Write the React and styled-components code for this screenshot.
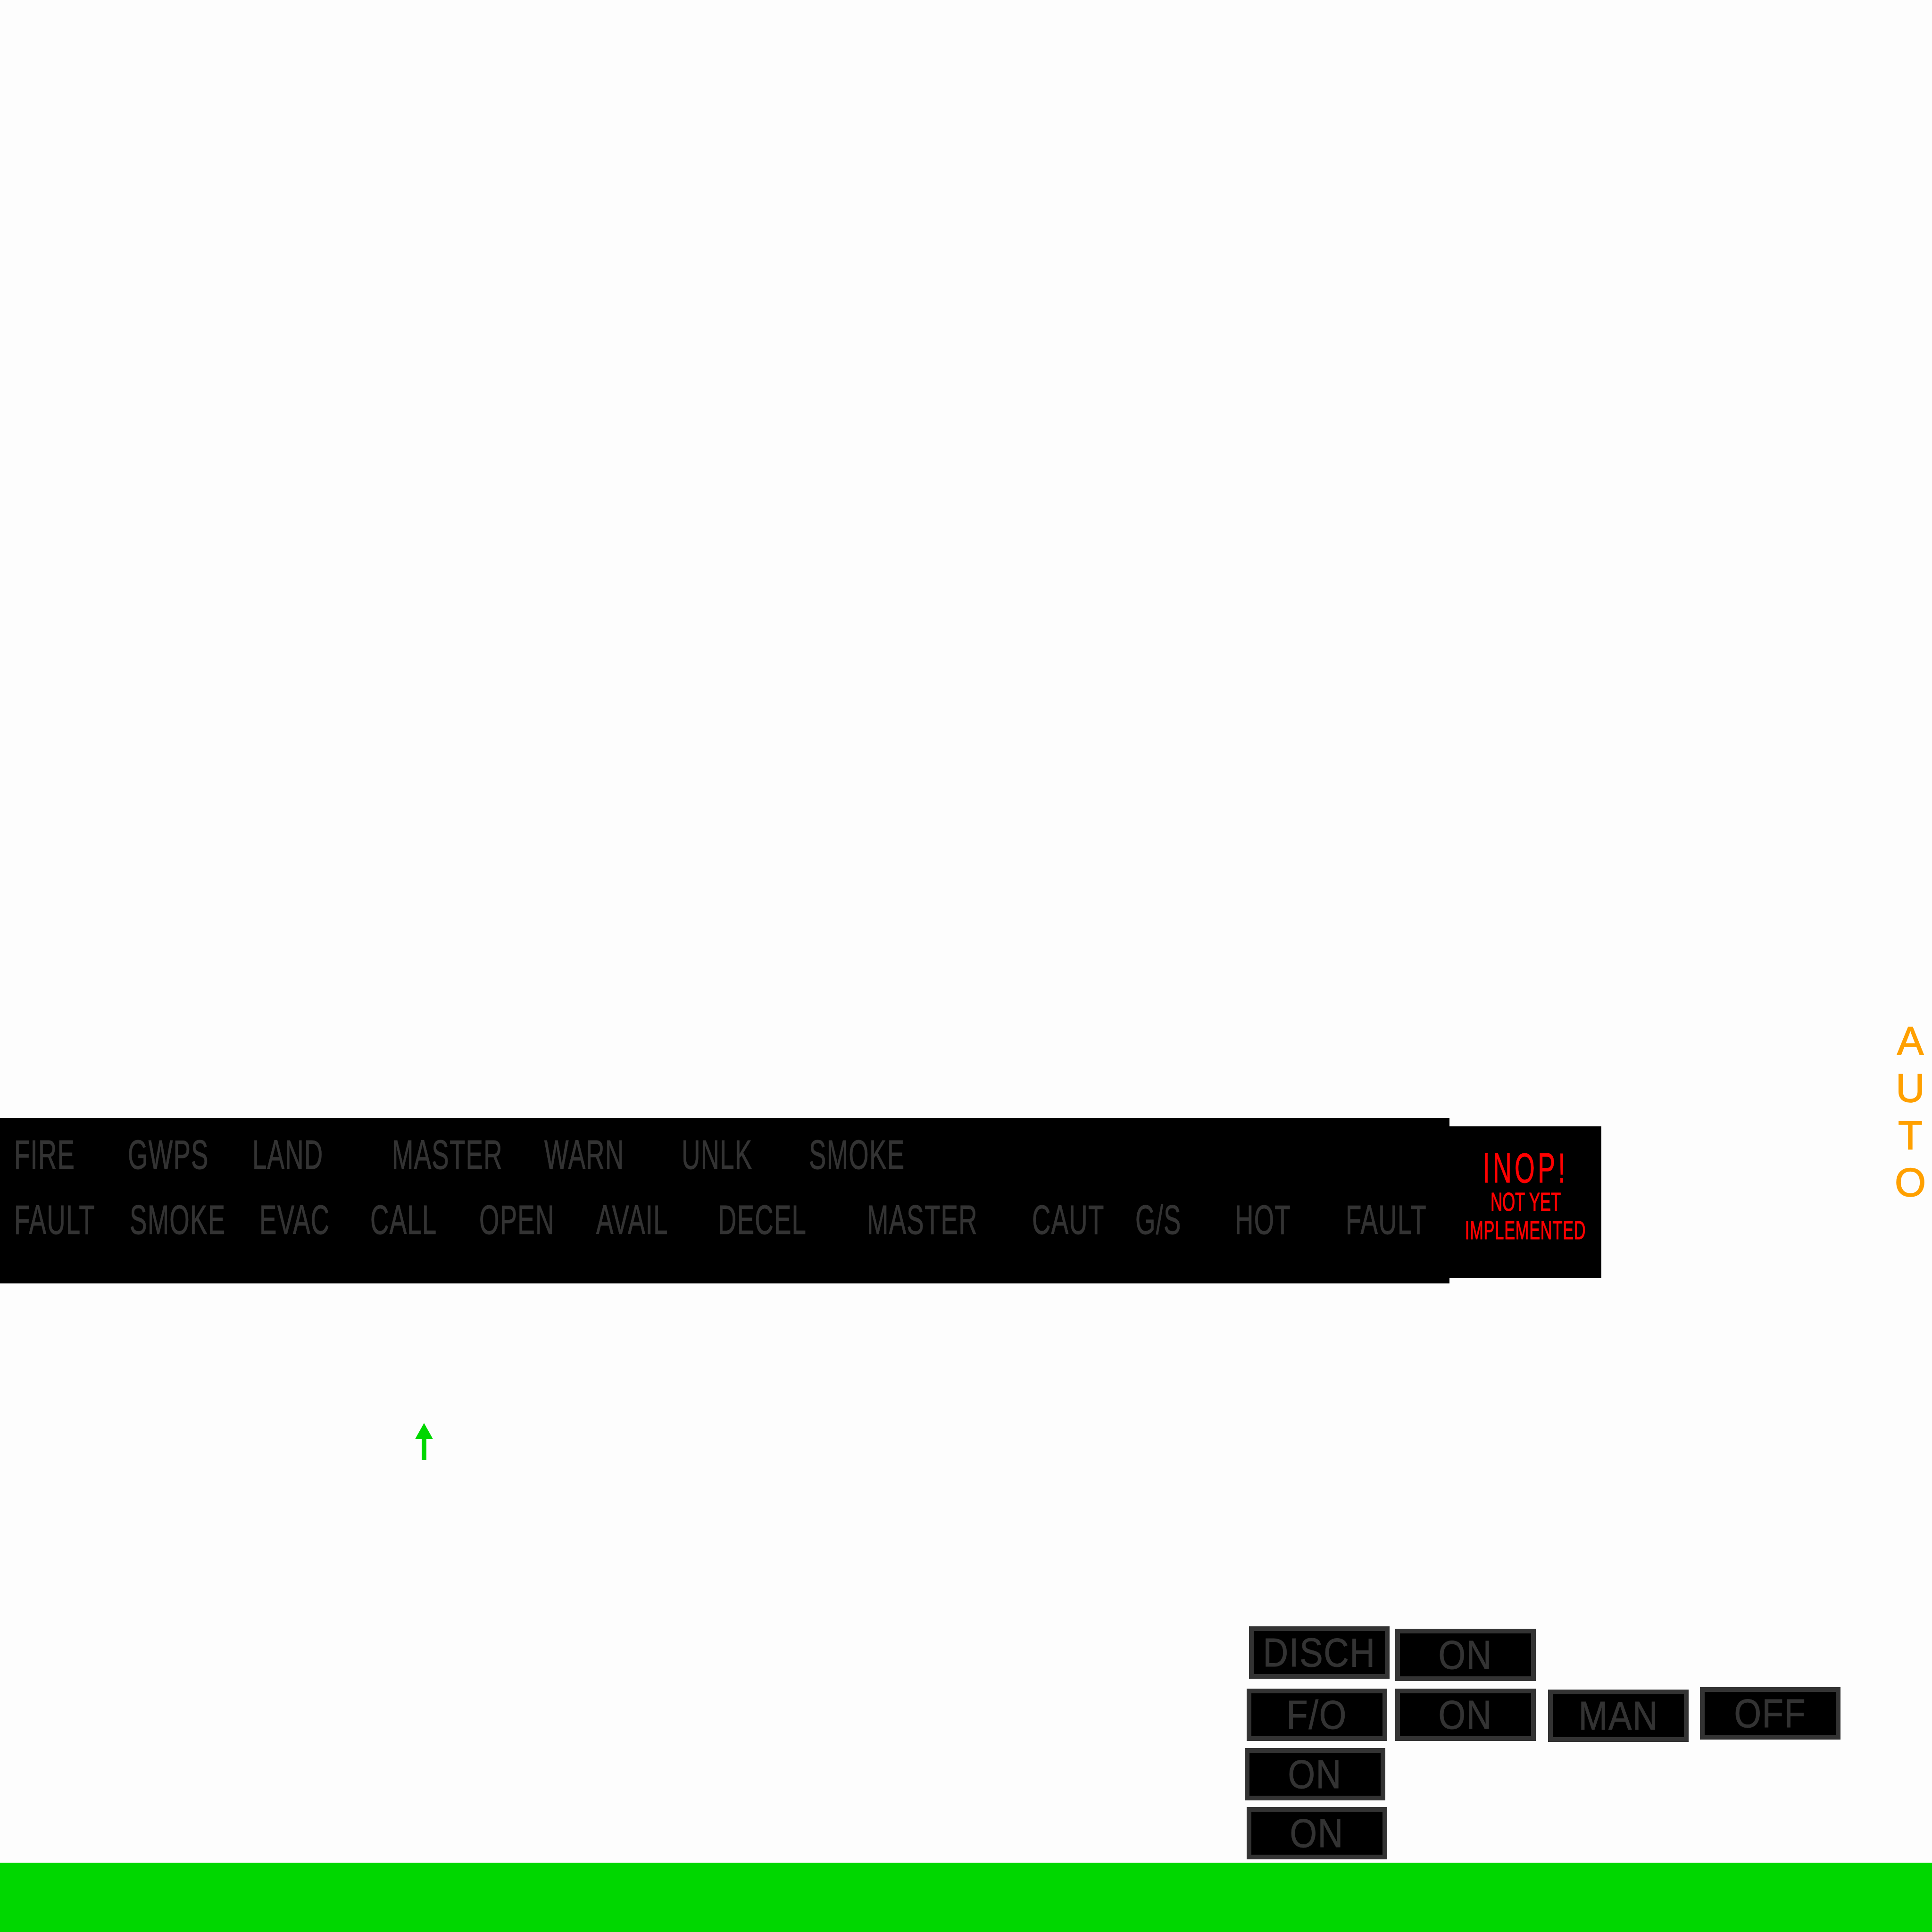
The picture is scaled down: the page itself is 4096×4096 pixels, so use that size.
import styled, { createGlobalStyle } from 'styled-components';

const GlobalStyle = createGlobalStyle`
    html, body {
        margin: 0;
        padding: 0;
        background: #fdfdfd;
    }
`;

const Screen = styled.div`
    width: 4096px;
    height: 4096px;
    display: flex;
    flex-direction: column;
    background: #fdfdfd;
    overflow: hidden;
    font-family: "Liberation Sans", Arial, sans-serif;
`;

const TopRow = styled.div`
    display: flex;
    justify-content: space-between;
    align-items: flex-start;
    margin-top: 2157px;
`;

const AlertGroup = styled.div`
    display: flex;
    align-items: flex-start;
    margin-top: 213px;
`;

const WarningStrip = styled.div`
    width: 3073px;
    height: 351px;
    flex: 0 0 auto;
    background: #000;
    box-sizing: border-box;
    padding: 34px 0 0 30px;
    display: flex;
    flex-direction: column;
    gap: 50px;
    overflow: hidden;
`;

const LabelRow = styled.div`
    display: flex;
    height: 88px;
`;

const Cell = styled.div`
    flex: ${p => (p.$w ? `0 0 ${p.$w}px` : '0 0 auto')};
    min-width: 0;
    white-space: nowrap;
`;

const Label = styled.span`
    display: inline-block;
    font-size: 88px;
    line-height: 88px;
    letter-spacing: 2px;
    color: #333;
    -webkit-text-stroke: 1px #333;
    transform: scaleX(0.62);
    transform-origin: left center;
`;

const InopBox = styled.div`
    width: 322px;
    height: 322px;
    flex: 0 0 auto;
    margin-top: 18px;
    background: #000;
    box-sizing: border-box;
    padding-top: 53px;
    display: flex;
    flex-direction: column;
    align-items: center;
    color: #ff0000;
    white-space: nowrap;
`;

const InopLine = styled.span`
    display: block;
    font-size: ${p => p.$size}px;
    line-height: ${p => p.$lh}px;
    letter-spacing: ${p => p.$spacing || 0}px;
    margin-top: ${p => p.$gap || 0}px;
    -webkit-text-stroke: 1px #ff0000;
    transform: scaleX(0.62);
`;

const AutoLabel = styled.div`
    width: 60px;
    margin-right: 16px;
    display: flex;
    flex-direction: column;
    align-items: center;
    color: #ffa000;
    -webkit-text-stroke: 1.5px #ffa000;
    font-size: 85px;
    line-height: 100px;
`;

const ArrowMark = styled.svg`
    display: block;
    margin: 296px 0 0 880px;
`;

const SwitchPanel = styled.div`
    display: grid;
    grid-template-columns: 315px 324px 322px 298px;
    grid-template-rows: 132px 126px 125px 111px;
    margin: 353px 0 0 2643px;
`;

const Switch = styled.div`
    grid-column: ${p => p.$col};
    grid-row: ${p => p.$row};
    width: 298px;
    height: 111px;
    margin-left: ${p => p.$dx || 0}px;
    margin-top: ${p => p.$dy || 0}px;
    box-sizing: border-box;
    border: 10px solid #333;
    background: #000;
    display: flex;
    align-items: center;
    justify-content: center;
`;

const SwitchText = styled.span`
    font-size: 85px;
    line-height: 85px;
    letter-spacing: 2px;
    color: #333;
    -webkit-text-stroke: 1px #333;
    transform: scaleX(0.87);
`;

const GroundBar = styled.div`
    margin-top: auto;
    height: 147px;
    background: #00d700;
`;

const topLabels = [
    ['FIRE', 241], ['GWPS', 264], ['LAND', 296], ['MASTER', 323],
    ['WARN', 291], ['UNLK', 270], ['SMOKE'],
];

const bottomLabels = [
    ['FAULT', 245], ['SMOKE', 275], ['EVAC', 235], ['CALL', 231],
    ['OPEN', 248], ['AVAIL', 258], ['DECEL', 316], ['MASTER', 350],
    ['CAUT', 219], ['G/S', 211], ['HOT', 235], ['FAULT'],
];

const switches = [
    { text: 'DISCH', col: 1, row: 1, dx: 5 },
    { text: 'ON', col: 2, row: 1, dy: 5 },
    { text: 'F/O', col: 1, row: 2 },
    { text: 'ON', col: 2, row: 2 },
    { text: 'MAN', col: 3, row: 2, dy: 2 },
    { text: 'OFF', col: 4, row: 2, dy: -3 },
    { text: 'ON', col: 1, row: 3, dx: -4 },
    { text: 'ON', col: 1, row: 4 },
];

const App = () => {
    return (
        <>
            <GlobalStyle />
            <Screen>
                <TopRow>
                    <AlertGroup>
                        <WarningStrip>
                            <LabelRow>
                                {topLabels.map(([txt, w], i) => (
                                    <Cell key={i} $w={w}><Label>{txt}</Label></Cell>
                                ))}
                            </LabelRow>
                            <LabelRow>
                                {bottomLabels.map(([txt, w], i) => (
                                    <Cell key={i} $w={w}><Label>{txt}</Label></Cell>
                                ))}
                            </LabelRow>
                        </WarningStrip>
                        <InopBox>
                            <InopLine $size={89} $lh={70} $spacing={10}>INOP!</InopLine>
                            <InopLine $size={56} $lh={44} $gap={15}>NOT YET</InopLine>
                            <InopLine $size={55} $lh={44} $spacing={1.5} $gap={16}>IMPLEMENTED</InopLine>
                        </InopBox>
                    </AlertGroup>
                    <AutoLabel aria-label="AUTO">
                        {'AUTO'.split('').map((c, i) => <span key={i}>{c}</span>)}
                    </AutoLabel>
                </TopRow>

                <ArrowMark width="38" height="78" viewBox="0 0 38 78">
                    <polygon points="19,0 0,34 38,34" fill="#00d700" />
                    <rect x="14" y="34" width="10" height="44" fill="#00d700" />
                </ArrowMark>

                <SwitchPanel>
                    {switches.map((s, i) => (
                        <Switch key={i} $col={s.col} $row={s.row} $dx={s.dx} $dy={s.dy}>
                            <SwitchText>{s.text}</SwitchText>
                        </Switch>
                    ))}
                </SwitchPanel>

                <GroundBar />
            </Screen>
        </>
    );
}

export default App;
